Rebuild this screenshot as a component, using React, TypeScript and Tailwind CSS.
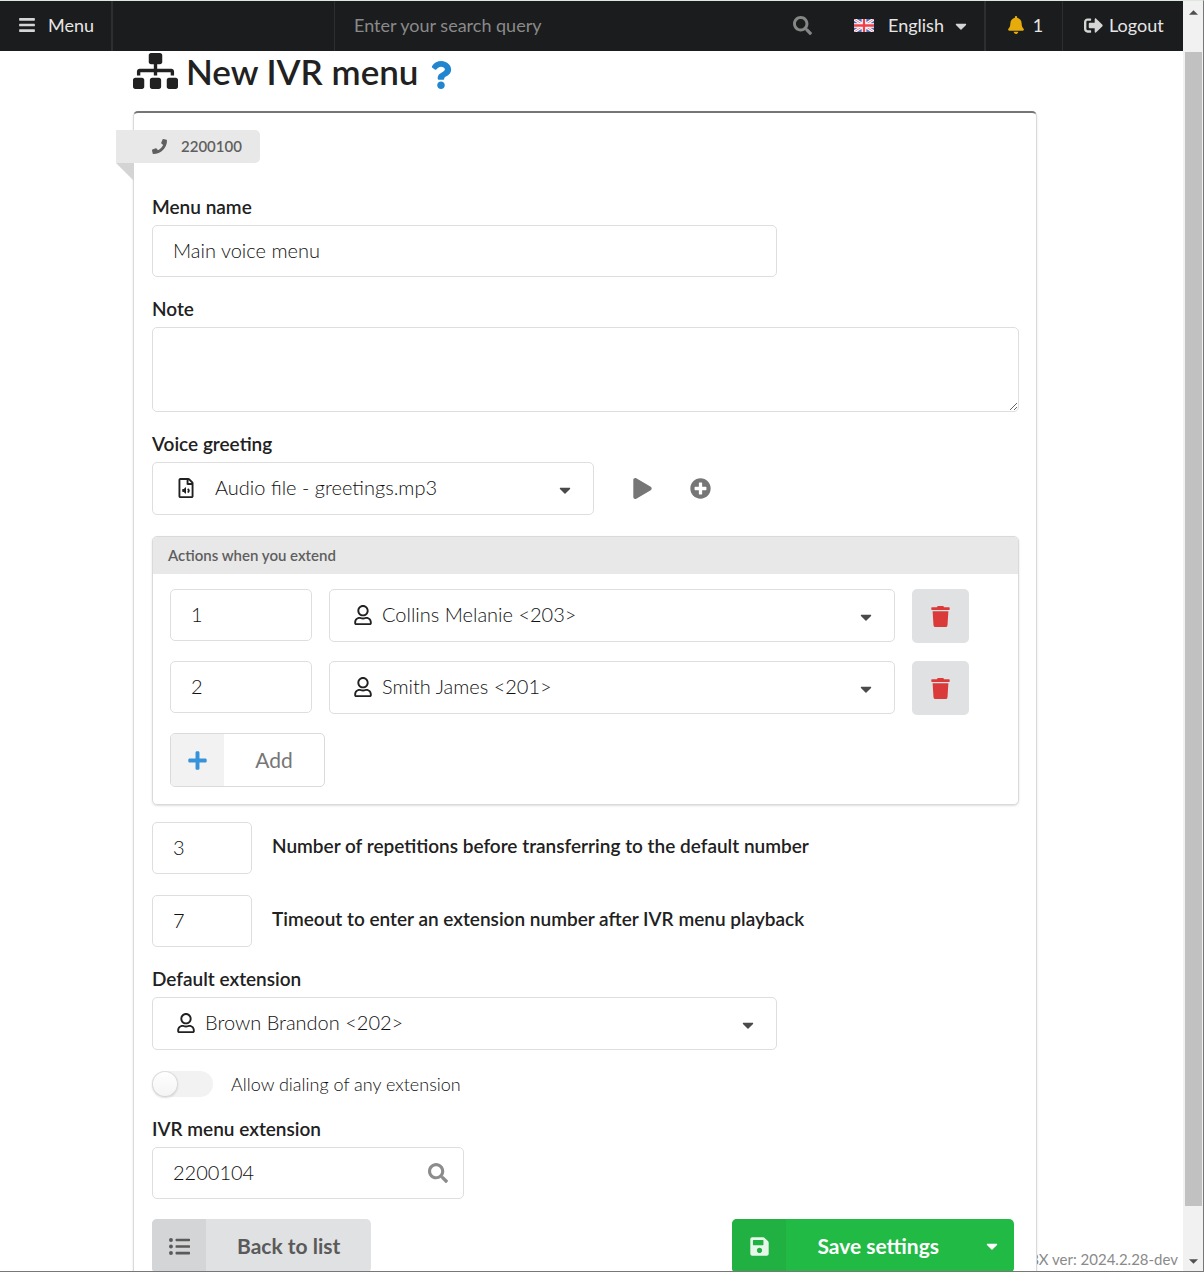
import type { ReactNode } from "react";
import {
  FaBars,
  FaBell,
  FaCaretDown,
  FaListUl,
  FaPhone,
  FaPlay,
  FaPlus,
  FaPlusCircle,
  FaQuestion,
  FaRegFileAudio,
  FaRegUser,
  FaSave,
  FaSearch,
  FaSignOutAlt,
  FaSitemap,
  FaTrash,
} from "react-icons/fa";

const inputClass =
  "h-[52px] rounded-[5px] border border-[#dededf] bg-white px-5 pb-0.5 text-xl font-light text-[#111] outline-none";
const labelClass = "mb-1.5 block text-[19px] leading-6 font-semibold text-[#212121]";

function Flag() {
  return (
    <svg viewBox="0 0 60 39" className="h-[13px] w-5" aria-hidden="true">
      <rect width="60" height="39" fill="#4f70b8" />
      <path d="M0 0L60 39M60 0L0 39" stroke="#fff" strokeWidth="9" />
      <path d="M0 0L60 39M60 0L0 39" stroke="#f08088" strokeWidth="3" />
      <path d="M30 0V39M0 19.5H60" stroke="#fff" strokeWidth="14" />
      <path d="M30 0V39M0 19.5H60" stroke="#f0404a" strokeWidth="7" />
    </svg>
  );
}

function Select({
  id,
  label,
  value,
  icon,
  className,
  padding = "pl-[52px]",
}: {
  id: string;
  label?: string;
  value: string;
  icon: ReactNode;
  className: string;
  padding?: string;
}) {
  return (
    <div className={`relative h-[53px] ${className}`}>
      <select
        id={id}
        aria-label={label}
        className={`h-full w-full appearance-none rounded-[5px] border border-[#dededf] bg-white pr-12 pb-[3px] text-xl font-light text-[#111] outline-none ${padding}`}
      >
        <option>{value}</option>
      </select>
      <span className="pointer-events-none absolute inset-y-0 left-6 flex items-center pb-0.5 text-[#212121]">
        {icon}
      </span>
      <FaCaretDown className="pointer-events-none absolute top-[19px] right-5 size-[18px] text-[#4a4a4a]" />
    </div>
  );
}

function ActionRow({ digit, person }: { digit: string; person: string }) {
  return (
    <div className="flex h-[53px] gap-[17px]">
      <input
        className={`${inputClass} w-[142px]`}
        aria-label="Digit"
        defaultValue={digit}
      />
      <Select
        id={`extension-${digit}`}
        label={`Extension for ${digit}`}
        value={person}
        className="flex-1"
        icon={<FaRegUser className="size-5" />}
      />
      <button
        type="button"
        aria-label="Delete"
        className="flex h-[54px] w-[57px] items-center justify-center rounded-[5px] bg-[#e0e1e2] text-[#db3a3a]"
      >
        <FaTrash className="size-[21px]" />
      </button>
    </div>
  );
}

function Header() {
  return (
    <header className="flex h-[50px] shrink-0 items-stretch bg-[#1b1c1d] text-lg text-[#e6e6e6]">
      <button
        type="button"
        className="flex w-[113px] items-center gap-3 border-r-2 border-[#2d2e2f] pb-0.5 pl-[18px]"
      >
        <FaBars className="size-[18px] text-[#d5d5d5]" />
        Menu
      </button>
      <div className="w-[222px] border-r border-[#2d2e2f]" />
      <div className="flex flex-1 items-center pb-0.5 pl-[19px]">
        <input
          type="text"
          aria-label="Search"
          placeholder="Enter your search query"
          className="min-w-0 flex-1 bg-transparent outline-none placeholder:text-[#8a8a8a]"
        />
        <FaSearch className="mr-[22px] size-[19px] text-[#858686]" />
      </div>
      <button
        type="button"
        className="flex w-[152px] items-center gap-3.5 border-r-2 border-[#2d2e2f] pb-0.5 pl-5"
      >
        <Flag />
        <span className="flex items-center gap-2">
          English
          <FaCaretDown className="mt-0.5 size-[18px] text-[#d5d5d5]" />
        </span>
      </button>
      <button
        type="button"
        className="flex w-[77px] items-center justify-center gap-2 border-r border-[#2d2e2f] pb-0.5 pl-0.5"
      >
        <FaBell className="size-[18px] text-[#e5ac0c]" />
        1
      </button>
      <a href="#logout" className="flex w-[120px] items-center gap-1.5 pb-0.5 pl-[21px]">
        <FaSignOutAlt className="size-[19px] text-[#d5d5d5]" />
        Logout
      </a>
    </header>
  );
}

function Scrollbar() {
  return (
    <div className="flex w-5 shrink-0 flex-col items-center bg-[#f1f1f1] text-[#505050]">
      <div className="flex h-[51px] w-full justify-center pt-[9px]">
        <svg viewBox="0 0 10 5" className="h-[5px] w-[9px]">
          <path d="M0 5L5 0L10 5Z" fill="currentColor" />
        </svg>
      </div>
      <div className="w-[17px] flex-1 bg-[#c1c1c1]" />
      <div className="flex h-[65px] w-full items-end justify-center pb-[7px]">
        <svg viewBox="0 0 10 5" className="h-[5px] w-[9px]">
          <path d="M0 0L5 5L10 0Z" fill="currentColor" />
        </svg>
      </div>
    </div>
  );
}

export default function App() {
  return (
    <div className="flex h-screen overflow-hidden border-t border-r border-b border-t-[#dfe8df] border-r-[#777] border-b-[#777] bg-white font-['Lato',sans-serif] text-[#212121]">
      <div className="relative flex min-w-0 flex-1 flex-col overflow-hidden">
        <Header />
        <p className="absolute right-[5px] bottom-0.5 text-[15px] leading-5 text-[#8a8a8a]">
          MikoPBX ver: 2024.2.28-dev
        </p>
        <main className="pr-[146px] pl-[133px]">
          <h1 className="flex h-[60px] items-start gap-2 text-[35px] leading-10 font-semibold">
            <FaSitemap className="h-10 w-[45px]" />
            New IVR menu
            <a href="#help" aria-label="Help" className="mt-2.5 text-[#2185d0]">
              <FaQuestion className="size-7" />
            </a>
          </h1>
          <form className="relative rounded-[5px] border border-t-2 border-[#dadadb] border-t-[#767676] bg-white pt-[17px] pr-[17px] pb-5 pl-[18px] shadow-[0_1px_2px_rgba(34,36,38,0.15)]">
            <div className="relative -ml-9 flex h-[33px] w-36 items-center rounded-r-[5px] bg-[#e8e8e8] pl-9 text-[15px] font-semibold text-[#5f5f5f]">
              <FaPhone className="mr-3.5 size-[15px]" />
              2200100
              <svg viewBox="0 0 18 18" className="absolute top-full left-0 size-[18px]">
                <path d="M0 0H18V18Z" fill="#d4d4d5" />
              </svg>
            </div>

            <div className="mt-8">
              <label htmlFor="name" className={labelClass}>
                Menu name
              </label>
              <input id="name" className={`${inputClass} w-full max-w-[625px]`} defaultValue="Main voice menu" />
            </div>

            <div className="mt-5">
              <label htmlFor="note" className={labelClass}>
                Note
              </label>
              <textarea
                id="note"
                className="block h-[85px] w-full resize-y rounded-[5px] border border-[#dededf] p-4 text-xl font-light outline-none"
              />
            </div>

            <div className="mt-5">
              <label htmlFor="greeting" className={labelClass}>
                Voice greeting
              </label>
              <div className="flex items-center text-[#767676]">
                <Select
                  id="greeting"
                  value="Audio file - greetings.mp3"
                  className="w-[442px]"
                  padding="pl-[62px]"
                  icon={<FaRegFileAudio className="size-5" />}
                />
                <button type="button" aria-label="Play" className="ml-[38px]">
                  <FaPlay className="size-[21px]" />
                </button>
                <button type="button" aria-label="Add audio file" className="ml-[37px]">
                  <FaPlusCircle className="size-[21px]" />
                </button>
              </div>
            </div>

            <section className="mt-[21px] rounded-[5px] border border-[#dadadb] shadow-[0_1px_2px_rgba(34,36,38,0.15)]">
              <h2 className="h-[37px] rounded-t bg-[#e8e8e8] px-[15px] text-[15px] leading-[37px] font-semibold text-[#5f5f5f]">
                Actions when you extend
              </h2>
              <div className="flex flex-col gap-[19px] pt-[15px] pr-[49px] pb-[17px] pl-[17px]">
                <ActionRow digit="1" person="Collins Melanie <203>" />
                <ActionRow digit="2" person="Smith James <201>" />
                <button
                  type="button"
                  className="flex h-[54px] w-[155px] overflow-hidden rounded-[5px] border border-[#dadadb] text-[21px] text-[#767676]"
                >
                  <span className="flex h-full w-[53px] items-center justify-center bg-[#f2f2f2] text-[#3793d9]">
                    <FaPlus className="size-[21px]" />
                  </span>
                  <span className="flex h-full flex-1 items-center justify-center">Add</span>
                </button>
              </div>
            </section>

            <div className="mt-[17px] flex items-center gap-5">
              <input id="repeat" className={`${inputClass} w-[100px]`} defaultValue="3" />
              <label htmlFor="repeat" className="pb-1 text-[19px] leading-6 font-semibold">
                Number of repetitions before transferring to the default number
              </label>
            </div>
            <div className="mt-[21px] flex items-center gap-5">
              <input id="timeout" className={`${inputClass} w-[100px]`} defaultValue="7" />
              <label htmlFor="timeout" className="pb-1 text-[19px] leading-6 font-semibold">
                Timeout to enter an extension number after IVR menu playback
              </label>
            </div>

            <div className="mt-5">
              <label htmlFor="default" className={labelClass}>
                Default extension
              </label>
              <Select
                id="default"
                value="Brown Brandon <202>"
                className="w-full max-w-[625px]"
                icon={<FaRegUser className="size-5" />}
              />
            </div>

            <label className="mt-[21px] flex h-[26px] items-center text-lg leading-6 font-light text-[#111]">
              <input
                type="checkbox"
                role="switch"
                className="mr-[18px] h-[26px] w-[61px] appearance-none rounded-full bg-[#f2f2f2] before:block before:size-[26px] before:rounded-full before:bg-linear-to-b before:from-white before:to-[#f4f4f4] before:shadow-[0_1px_2px_rgba(34,36,38,0.15),0_0_0_1px_rgba(34,36,38,0.15)_inset] checked:bg-[#2185d0] checked:before:ml-auto"
              />
              Allow dialing of any extension
            </label>

            <div className="mt-5">
              <label htmlFor="extension" className={labelClass}>
                IVR menu extension
              </label>
              <div className="relative w-[312px]">
                <input id="extension" className={`${inputClass} w-full`} defaultValue="2200104" />
                <FaSearch className="absolute top-4 right-4 size-5 text-[#8c8c8c]" />
              </div>
            </div>

            <div className="mt-5 mr-[5px] flex justify-between text-[21px] font-bold">
              <button
                type="button"
                className="flex h-[54px] overflow-hidden rounded-[5px] bg-[#e0e1e2] text-[#5a5a5a]"
              >
                <span className="flex h-full w-[54px] items-center justify-center bg-[#d4d5d6]">
                  <FaListUl className="size-[21px]" />
                </span>
                <span className="flex h-full items-center px-[31px]">Back to list</span>
              </button>
              <div className="flex h-[54px] overflow-hidden rounded-[5px] bg-[#21ba45] text-white">
                <button type="button" className="flex">
                  <span className="flex h-full w-[54px] items-center justify-center bg-[#20b142] text-[#e6f7ea]">
                    <FaSave className="size-[21px]" />
                  </span>
                  <span className="flex h-full items-center px-[31px]">Save settings</span>
                </button>
                <button type="button" aria-label="More save options" className="flex w-11 items-center justify-center">
                  <FaCaretDown className="size-[18px]" />
                </button>
              </div>
            </div>
          </form>
        </main>
      </div>
      <Scrollbar />
    </div>
  );
}
